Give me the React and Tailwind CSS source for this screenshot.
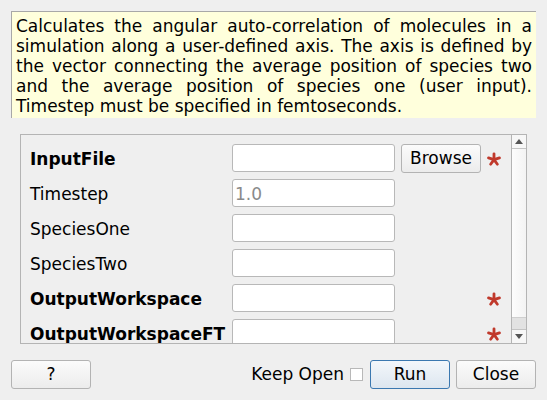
import React from "react";

const font = { fontFamily: '"DejaVu Sans", sans-serif' };

// Red asterisk used for mandatory fields
const Required = () => (
  <svg width="19" height="18" viewBox="-9.5 -9 19 18" className="block">
    {[-90, -18, 54, 126, 198].map((a) => {
      const r = (a * Math.PI) / 180;
      return (
        <line
          key={a}
          x1="0"
          y1="0.8"
          x2={(7.8 * Math.cos(r)).toFixed(2)}
          y2={(0.8 + 7.8 * Math.sin(r)).toFixed(2)}
          stroke="#c0392b"
          strokeWidth="3.8"
          strokeLinecap="round"
        />
      );
    })}
    <circle cx="0" cy="0.8" r="3" fill="#c0392b" />
  </svg>
);

const rows = [
  { name: "InputFile", bold: true, browse: true, req: true },
  { name: "Timestep", placeholder: "1.0" },
  { name: "SpeciesOne" },
  { name: "SpeciesTwo" },
  { name: "OutputWorkspace", bold: true, req: true },
  { name: "OutputWorkspaceFT", bold: true, req: true },
];

const desc = [
  "Calculates the angular auto-correlation of molecules in a",
  "simulation along a user-defined axis. The axis is defined by",
  "the vector connecting the average position of species two",
  "and the average  position of species one (user input).",
];

const btn =
  "h-[29px] rounded-[3px] border border-[#b3b3b3] bg-gradient-to-b from-[#fbfbfb] to-[#ececec] text-[17px] text-black flex items-center justify-center";

export default function App() {
  return (
    <div className="w-[547px] h-[400px] bg-[#efefef] overflow-hidden" style={font}>
      <div className="pt-[11px] pl-[11px] pr-[11px]">
        <div className="h-[107px] bg-[#ffffdc] border-l border-t border-[#a8a8a8] pl-[4px] pr-[4px] pt-[4px] text-[17px] leading-[20px] text-black">
          {desc.map((l) => (
            <div key={l} className="text-justify [text-align-last:justify] whitespace-nowrap">
              {l}
            </div>
          ))}
          <div>Timestep must be specified in femtoseconds.</div>
        </div>
      </div>

      <div className="mt-[16px] ml-[20px] w-[507px] h-[210px] border border-[#b4b4b4] flex overflow-hidden">
        <div className="flex-1 pl-[9px] pt-[9px] flex flex-col gap-[7px]">
          {rows.map((r) => (
            <div key={r.name} className="flex items-center h-[28px] shrink-0">
              <div
                className={`w-[202px] pt-[4px] text-[17px] text-black ${r.bold ? "font-bold" : ""}`}
              >
                {r.name}
              </div>
              <div className="w-[163px] h-[28px] bg-white border border-[#b8b8b8] rounded-[3px] pl-[2px] pt-[3px] flex items-center text-[17px] text-[#8a8a8a]">
                {r.placeholder || ""}
              </div>
              <div className="w-[86px] pl-[6px] flex">
                {r.browse && <div className={`${btn} w-[80px] h-[28px] pt-[2px]`}>Browse</div>}
              </div>
              <div className="w-[20px] pl-[6px] pt-[2px] flex items-center justify-center">
                {r.req && <Required />}
              </div>
            </div>
          ))}
        </div>
        <div className="w-[15px] h-full border-l border-[#b4b4b4] flex flex-col bg-[#f7f7f7]">
          <div className="h-[14px] border-b border-[#c4c4c4] flex items-center justify-center">
            <svg width="8" height="5" viewBox="0 0 8 5">
              <path d="M0 5 L4 0 L8 5 Z" fill="#555" />
            </svg>
          </div>
          <div className="flex-1 bg-gradient-to-r from-[#fdfdfd] to-[#f3f3f3]" />
          <div className="h-[12px] bg-[#e2e2e2] border-t border-[#cfcfcf]" />
          <div className="h-[14px] border-t border-[#c4c4c4] flex items-center justify-center">
            <svg width="8" height="5" viewBox="0 0 8 5">
              <path d="M0 0 L4 5 L8 0 Z" fill="#555" />
            </svg>
          </div>
        </div>
      </div>

      <div className="mt-[16px] px-[11px] flex items-center">
        <div className={`${btn} w-[80px]`}>?</div>
        <div className="flex-1" />
        <span className="text-[17px] text-black">Keep Open</span>
        <div className="ml-[6px] w-[13px] h-[13px] bg-white border border-[#b8b8b8]" />
        <div className="ml-[7px] w-[80px] h-[29px] rounded-[3px] border border-[#3b78b0] bg-gradient-to-b from-[#f3f7fb] to-[#dde6ef] text-[17px] text-black flex items-center justify-center">
          Run
        </div>
        <div className={`${btn} ml-[6px] w-[80px]`}>Close</div>
      </div>
    </div>
  );
}
